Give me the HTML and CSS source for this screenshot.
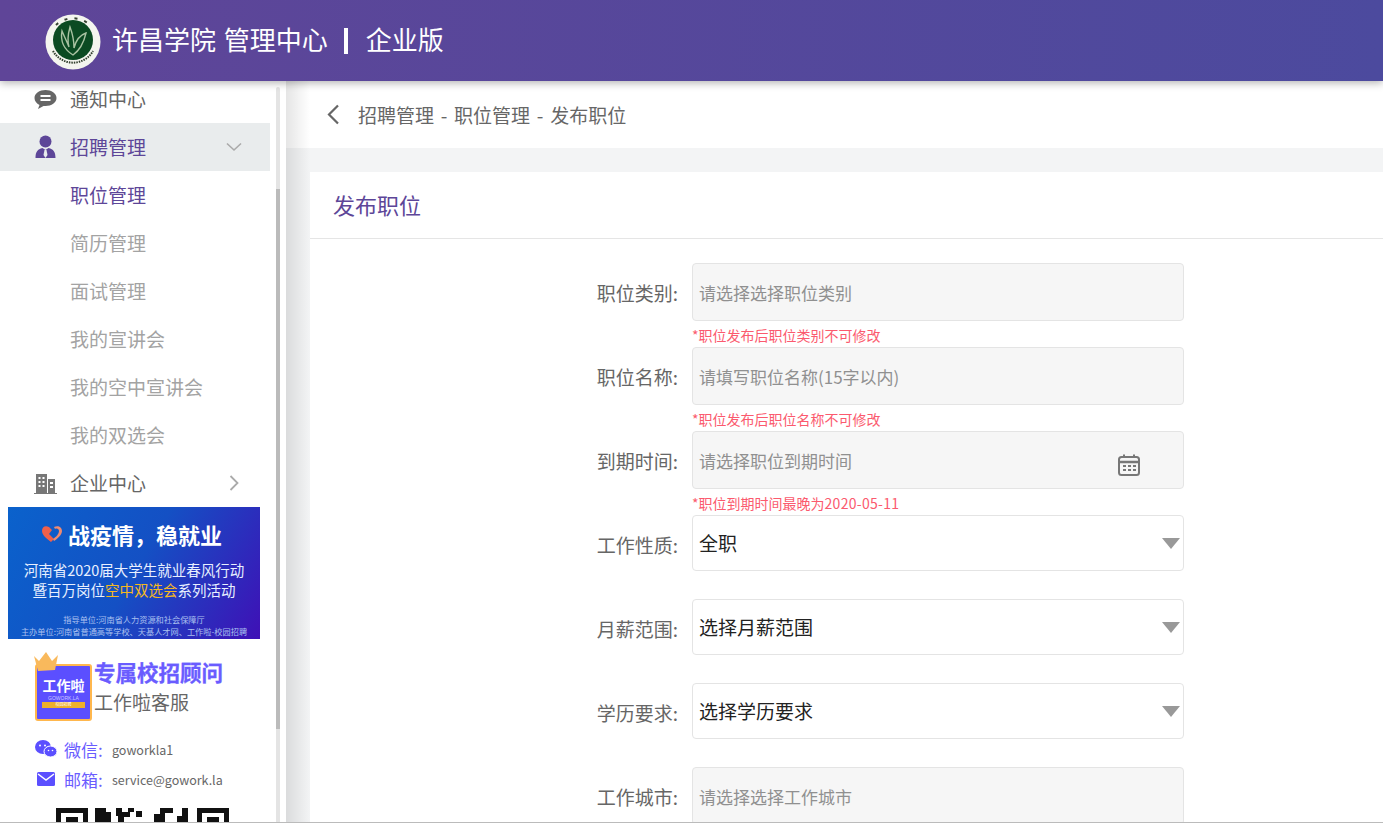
FILE: index.html
```html
<!DOCTYPE html>
<html lang="zh-CN">
<head>
<meta charset="UTF-8" />
<title>发布职位</title>
<link rel="stylesheet" href="styles.css">
</head>
<body>
	<div class="page">
		<header class="topbar">
			<svg class="logo" width="56" height="56" viewBox="0 0 56 56">
				<circle cx="28" cy="28" r="27.500" fill="#f4f5ef" />
				<circle cx="28" cy="26" r="20" fill="#0b4a22" />
				<path d="M28 41C20 36 15 28 17 17C20 24 22 28 24 33C22 26 23 20 25 13C28 21 29 27 29 34C31 26 35 21 41 19C39 28 35 36 28 41Z" fill="none" stroke="#a9c2a2" stroke-width="1.400" />
				<path d="M8 37A23 23 0 0 0 48 37" fill="none" stroke="#33402f" stroke-width="2" stroke-dasharray="1.500 1" />
				<path d="M11 11A25 25 0 0 1 45 11" fill="none" stroke="#33402f" stroke-width="2" stroke-dasharray="3 7" />
			</svg>
			<h1 class="site-title">许昌学院 管理中心<i class="title-bar"></i>企业版</h1>
		</header>
		<div class="layout">
			<aside class="sidebar">
				<ul class="menu">
					<li class="menu-item">
						<svg class="menu-icon" width="22" height="22" viewBox="0 0 22 22"><path d="M11 2C5 2 0 5.500 0 10C0 13 2 15.500 5 17L3.500 21L9 18C9.500 18 10.500 18 11 18C17 18 22 14.500 22 10C22 5.500 17 2 11 2Z" fill="#666" /><path d="M6 8H16M6 12H16" stroke="#fff" stroke-width="2" /></svg>
						通知中心
					</li>
					<li class="menu-item active">
						<svg class="menu-icon" width="22" height="24" viewBox="0 0 22 24"><circle cx="11" cy="6.500" r="6" fill="#5d4698" /><path d="M1 23C1 17 3 14 8 13L11 15L14 13C19 14 21 17 21 23Z" fill="#5d4698" /><path d="M10 15H12L13 20L11 23L9 20Z" fill="#e9eced" /></svg>
						招聘管理
						<svg class="menu-arrow" width="16" height="10" viewBox="0 0 16 10"><path d="M1 1.500L8 8L15 1.500" fill="none" stroke="#aaa" stroke-width="1.600" /></svg>
					</li>
					<li class="sub-item current">职位管理</li>
					<li class="sub-item">简历管理</li>
					<li class="sub-item">面试管理</li>
					<li class="sub-item">我的宣讲会</li>
					<li class="sub-item">我的空中宣讲会</li>
					<li class="sub-item">我的双选会</li>
					<li class="menu-item">
						<svg class="menu-icon" width="23" height="21" viewBox="0 0 23 21"><path d="M2 1H13V20H2ZM14 6H21V20H14Z" fill="#777" /><path d="M4.500 5H6.500M8.500 5H10.500M4.500 9H6.500M8.500 9H10.500M4.500 13H6.500M8.500 13H10.500M16 10H19M16 14H19" stroke="#fff" stroke-width="2" /><path d="M0 20.500H23" stroke="#777" stroke-width="1" /></svg>
						企业中心
						<svg class="menu-arrow" width="10" height="16" viewBox="0 0 10 16"><path d="M1.500 1L8.500 8L1.500 15" fill="none" stroke="#aaa" stroke-width="1.800" /></svg>
					</li>
				</ul>
				<div class="banner">
					<div class="banner-head">
						<svg width="22" height="18" viewBox="0 0 22 18"><path d="M8 2C4 0 1 2 1 6C1 10 6 14 10 17L13 14L8 9L11 5Z" fill="#f0604a" /><path d="M13 2C17 0 21 2 21 6C21 10 16 14 13 16L12 14C15 12 18 9 18 6C18 4 16 3 14 4Z" fill="#ef8a70" /></svg>
						<span>战疫情，稳就业</span>
					</div>
					<p class="banner-line">河南省2020届大学生就业春风行动</p>
					<p class="banner-line">暨百万岗位<em>空中双选会</em>系列活动</p>
					<p class="banner-small first">指导单位:河南省人力资源和社会保障厅</p>
					<p class="banner-small">主办单位:河南省普通高等学校、天基人才网、工作啦-校园招聘</p>
				</div>
				<div class="advisor">
					<div class="advisor-badge">
						<svg class="crown" width="26" height="20" viewBox="0 0 26 20"><path d="M1 5L6 10L13 1L19 10L25 4L22 19L5 20Z" fill="#f9b95c" /></svg>
						<b>工作啦</b>
						<small>GOWORK.LA</small>
						<span class="badge-band">校园招聘</span>
					</div>
					<div class="advisor-text">
						<strong>专属校招顾问</strong>
						<span>工作啦客服</span>
					</div>
				</div>
				<ul class="contacts">
					<li>
						<svg width="22" height="18" viewBox="0 0 22 18"><ellipse cx="8" cy="7" rx="8" ry="7" fill="#5b4fff" /><ellipse cx="15.500" cy="11.500" rx="6.500" ry="5.500" fill="#5b4fff" stroke="#fff" /><circle cx="5" cy="5.500" r="1" fill="#fff" /><circle cx="10" cy="5.500" r="1" fill="#fff" /><circle cx="13.500" cy="10.500" r="0.800" fill="#fff" /><circle cx="17.500" cy="10.500" r="0.800" fill="#fff" /></svg>
						<span class="contact-key">微信:</span>goworkla1
					</li>
					<li>
						<svg width="22" height="16" viewBox="0 0 22 16"><rect x="2" y="1" width="18" height="14" rx="1.500" fill="#5b4fff" /><path d="M3 3L11 9L19 3" fill="none" stroke="#fff" stroke-width="1.500" /></svg>
						<span class="contact-key">邮箱:</span>service@gowork.la
					</li>
				</ul>
				<svg class="qrcode" width="173" height="60" viewBox="0 0 173 60">
					<path d="M0 0H32V32H0ZM5 5V27H27V5Z" fill="#111" fill-rule="evenodd" />
					<path d="M10 9H22V23H10Z" fill="#111" />
					<path d="M141 0H173V32H141ZM146 5V27H168V5Z" fill="#111" fill-rule="evenodd" />
					<path d="M151 9H163V23H151Z" fill="#111" />
					<path d="M39 0H50V4H55V14H39ZM60 0H66V4H72V0H78V4H74V9H68V14H62V8H60ZM80 3H86V9H80ZM98 14V6H104V0H117V5H109V14ZM121 8H126V0H132V14H121Z" fill="#111" />
				</svg>
			</aside>
			<div class="scroll-track"><div class="scroll-thumb"></div></div>
			<main class="main">
				<div class="crumbs">
					<svg width="14" height="21" viewBox="0 0 14 21"><path d="M12 1.500L3 10.500L12 19.500" fill="none" stroke="#666" stroke-width="2.200" /></svg>
					<span>招聘管理 - 职位管理 - 发布职位</span>
				</div>
				<section class="card">
					<h2 class="card-title">发布职位</h2>
					<div class="form">
						<div class="field">
							<label>职位类别:</label>
							<div class="control">
								<div class="input">请选择选择职位类别</div>
								<p class="note">*职位发布后职位类别不可修改</p>
							</div>
						</div>
						<div class="field">
							<label>职位名称:</label>
							<div class="control">
								<div class="input">请填写职位名称(15字以内)</div>
								<p class="note">*职位发布后职位名称不可修改</p>
							</div>
						</div>
						<div class="field">
							<label>到期时间:</label>
							<div class="control">
								<div class="input">
									请选择职位到期时间
									<svg class="date-icon" width="24" height="22" viewBox="0 0 24 22"><rect x="2" y="3" width="20" height="18" rx="2.500" fill="none" stroke="#777" stroke-width="2" /><path d="M2 8H22" stroke="#777" stroke-width="2.500" /><path d="M7 0.500V4M17 0.500V4" stroke="#777" stroke-width="2" /><path d="M6 12H9M11 12H14M16 12H19M6 16H9M11 16H14M16 16H19" stroke="#777" stroke-width="2" /></svg>
								</div>
								<p class="note">*职位到期时间最晚为<span class="note-date">2020-05-11</span></p>
							</div>
						</div>
						<div class="field">
							<label>工作性质:</label>
							<div class="select">全职<i class="caret"></i></div>
						</div>
						<div class="field">
							<label>月薪范围:</label>
							<div class="select">选择月薪范围<i class="caret"></i></div>
						</div>
						<div class="field">
							<label>学历要求:</label>
							<div class="select">选择学历要求<i class="caret"></i></div>
						</div>
						<div class="field">
							<label>工作城市:</label>
							<div class="control">
								<div class="input">请选择选择工作城市</div>
							</div>
						</div>
					</div>
				</section>
			</main>
		</div>
	</div>
</body>
</html>
```

FILE: styles.css
```css
* {
	box-sizing: border-box;
}
html, body {
	margin: 0;
	height: 100%;
	overflow: hidden;
}
body {
	font-family: "Noto Sans CJK SC", "Noto Sans", sans-serif;
	color: #666;
	background-color: #fff;
}
ul, p, h1, h2 {
	margin: 0;
	padding: 0;
}
ul {
	list-style: none;
}
.page {
	display: flex;
	flex-direction: column;
	height: 823px;
	border-bottom: 1px solid #bbb;
	overflow: hidden;
}

/* top bar */
.topbar {
	position: relative;
	z-index: 2;
	flex: none;
	display: flex;
	align-items: center;
	gap: 11px;
	height: 81px;
	padding: 0 0 0 45px;
	background: linear-gradient(90deg, #5f4598, #4c4a9e);
	box-shadow: 0 2px 8px rgba(0, 0, 0, .3);
}
.logo {
	margin-top: 3px;
}
.site-title {
	display: flex;
	align-items: center;
	padding-bottom: 4px;
	font-size: 26px;
	font-weight: 400;
	word-spacing: 2px;
	color: #fff;
}
.title-bar {
	width: 4px;
	height: 26px;
	margin: 4px 18px 0 16px;
	background-color: #fff;
}
.layout {
	flex: 1;
	display: flex;
	min-height: 0;
}

/* left menu */
.sidebar {
	flex: none;
	width: 270px;
	overflow: hidden;
}
.menu {
	margin-top: -6px;
}
.menu-item, .sub-item {
	height: 48px;
	font-size: 19px;
}
.menu-item {
	position: relative;
	display: flex;
	align-items: center;
	padding: 0 0 2px 34px;
	color: #666;
}
.menu-icon {
	flex: none;
	width: 23px;
	margin: 2px 13px 0 0;
}
.menu-item.active {
	color: #5d4698;
	background-color: #e9eced;
}
.menu-arrow {
	position: absolute;
	right: 28px;
	top: 19px;
}
.menu-item:last-child .menu-arrow {
	right: 31px;
	top: 16px;
}
.sub-item {
	padding-left: 70px;
	line-height: 47px;
	color: #a3a3a3;
}
.sub-item.current {
	color: #5d4698;
}

/* banner */
.banner {
	width: 252px;
	height: 132px;
	margin-left: 8px;
	padding-top: 12px;
	text-align: center;
	color: #e8f0ff;
	background: linear-gradient(120deg, #0a62cc 0%, #1450c4 50%, #3f10b6 100%);
}
.banner-head {
	display: flex;
	justify-content: center;
	align-items: center;
	gap: 5px;
	height: 30px;
	margin-bottom: 11px;
	padding-right: 5px;
	font-size: 22px;
	font-weight: 700;
	color: #fff;
}
.banner-line {
	font-size: 14.500px;
	line-height: 20px;
}
.banner-line em {
	font-style: normal;
	color: #f5b81f;
}
.banner-small {
	font-size: 8.200px;
	line-height: 12px;
	color: #aac0f0;
}
.banner-small.first {
	margin-top: 13px;
}

/* advisor */
.advisor {
	display: flex;
	gap: 2px;
	margin: 25px 0 0 35px;
}
.advisor-badge {
	position: relative;
	flex: none;
	display: flex;
	flex-direction: column;
	align-items: center;
	width: 57px;
	height: 57px;
	padding-top: 13px;
	font-family: "Liberation Sans", "Noto Sans CJK SC", sans-serif;
	color: #fff;
	background-color: #5b4fff;
	border: 2px solid #ffb74d;
	border-radius: 3px;
}
.advisor-badge b {
	font-size: 14px;
	line-height: 14px;
}
.advisor-badge small {
	margin-top: 2px;
	font-size: 5px;
	line-height: 6px;
	color: #c9c6ff;
}
.badge-band {
	width: 43px;
	height: 6px;
	margin-top: 1px;
	font-size: 4px;
	line-height: 6px;
	text-align: center;
	background-color: #eeb02c;
}
.crown {
	position: absolute;
	left: -4px;
	top: -15px;
}
.advisor-text {
	display: flex;
	flex-direction: column;
	margin-top: -5px;
}
.advisor-text strong {
	font-size: 21.500px;
	line-height: 26px;
	color: #6a5cff;
	-webkit-text-stroke: .3px #6a5cff;
}
.advisor-text span {
	font-size: 19px;
	line-height: 34px;
	color: #666;
}

/* contact rows */
.contacts {
	margin: 13px 0 0 35px;
}
.contacts li {
	display: flex;
	align-items: center;
	height: 30px;
	font-size: 12.500px;
	color: #666;
}
.contacts svg {
	flex: none;
	margin-right: 7px;
}
.contact-key {
	width: 48px;
	font-size: 17px;
	color: #6a5cff;
}
.qrcode {
	display: block;
	margin: 14px 0 0 56px;
}

/* fake scrollbar */
.scroll-track {
	flex: none;
	width: 4px;
	margin: 6px 6px 0 6px;
	padding-top: 102px;
	background-color: #e4e4e4;
	border-radius: 2px 2px 0 0;
}
.scroll-thumb {
	height: 540px;
	background-color: #bbb;
}

/* content */
.main {
	position: relative;
	flex: 1;
	min-width: 0;
	display: flex;
	flex-direction: column;
	background-color: #f3f4f5;
}
.main::before {
	content: "";
	position: absolute;
	left: 0;
	top: 0;
	bottom: 0;
	width: 24px;
	background: linear-gradient(90deg, rgba(0, 0, 0, .1), rgba(0, 0, 0, 0));
}
.crumbs {
	flex: none;
	display: flex;
	align-items: center;
	gap: 18px;
	height: 67px;
	padding-left: 40px;
	font-size: 19px;
	word-spacing: 2.500px;
	background-color: #fff;
}
.crumbs span {
	margin-top: -1px;
}
.card {
	flex: 1;
	margin: 24px 0 0 24px;
	background-color: #fff;
}
.card-title {
	height: 67px;
	padding-left: 23px;
	font-size: 22px;
	font-weight: 400;
	line-height: 64px;
	color: #5d4698;
	border-bottom: 1px solid #e5e5e5;
}
.form {
	padding-top: 24px;
}
.field {
	display: flex;
	gap: 14px;
	font-size: 19px;
}
.field label {
	flex: none;
	width: 368px;
	height: 58px;
	line-height: 60px;
	text-align: right;
}
.control {
	width: 492px;
}
.input {
	position: relative;
	height: 58px;
	padding-left: 6px;
	font-size: 17px;
	line-height: 58px;
	color: #909090;
	background-color: #f6f6f6;
	border: 1px solid #e4e4e4;
	border-radius: 4px;
}
.note {
	height: 26px;
	padding-top: 5px;
	font-size: 14px;
	line-height: 18px;
	color: #fb5a6e;
}
.note-date {
	letter-spacing: .3px;
}
.date-icon {
	position: absolute;
	left: 424px;
	top: 22px;
}
.select {
	position: relative;
	width: 492px;
	height: 56px;
	margin-bottom: 28px;
	padding-left: 6px;
	line-height: 54px;
	color: #222;
	background-color: #fff;
	border: 1px solid #e4e4e4;
	border-radius: 4px;
}
.caret {
	position: absolute;
	right: 3px;
	top: 22px;
	width: 0;
	height: 0;
	border-top: 11px solid #999;
	border-left: 9.500px solid transparent;
	border-right: 9.500px solid transparent;
}
```
